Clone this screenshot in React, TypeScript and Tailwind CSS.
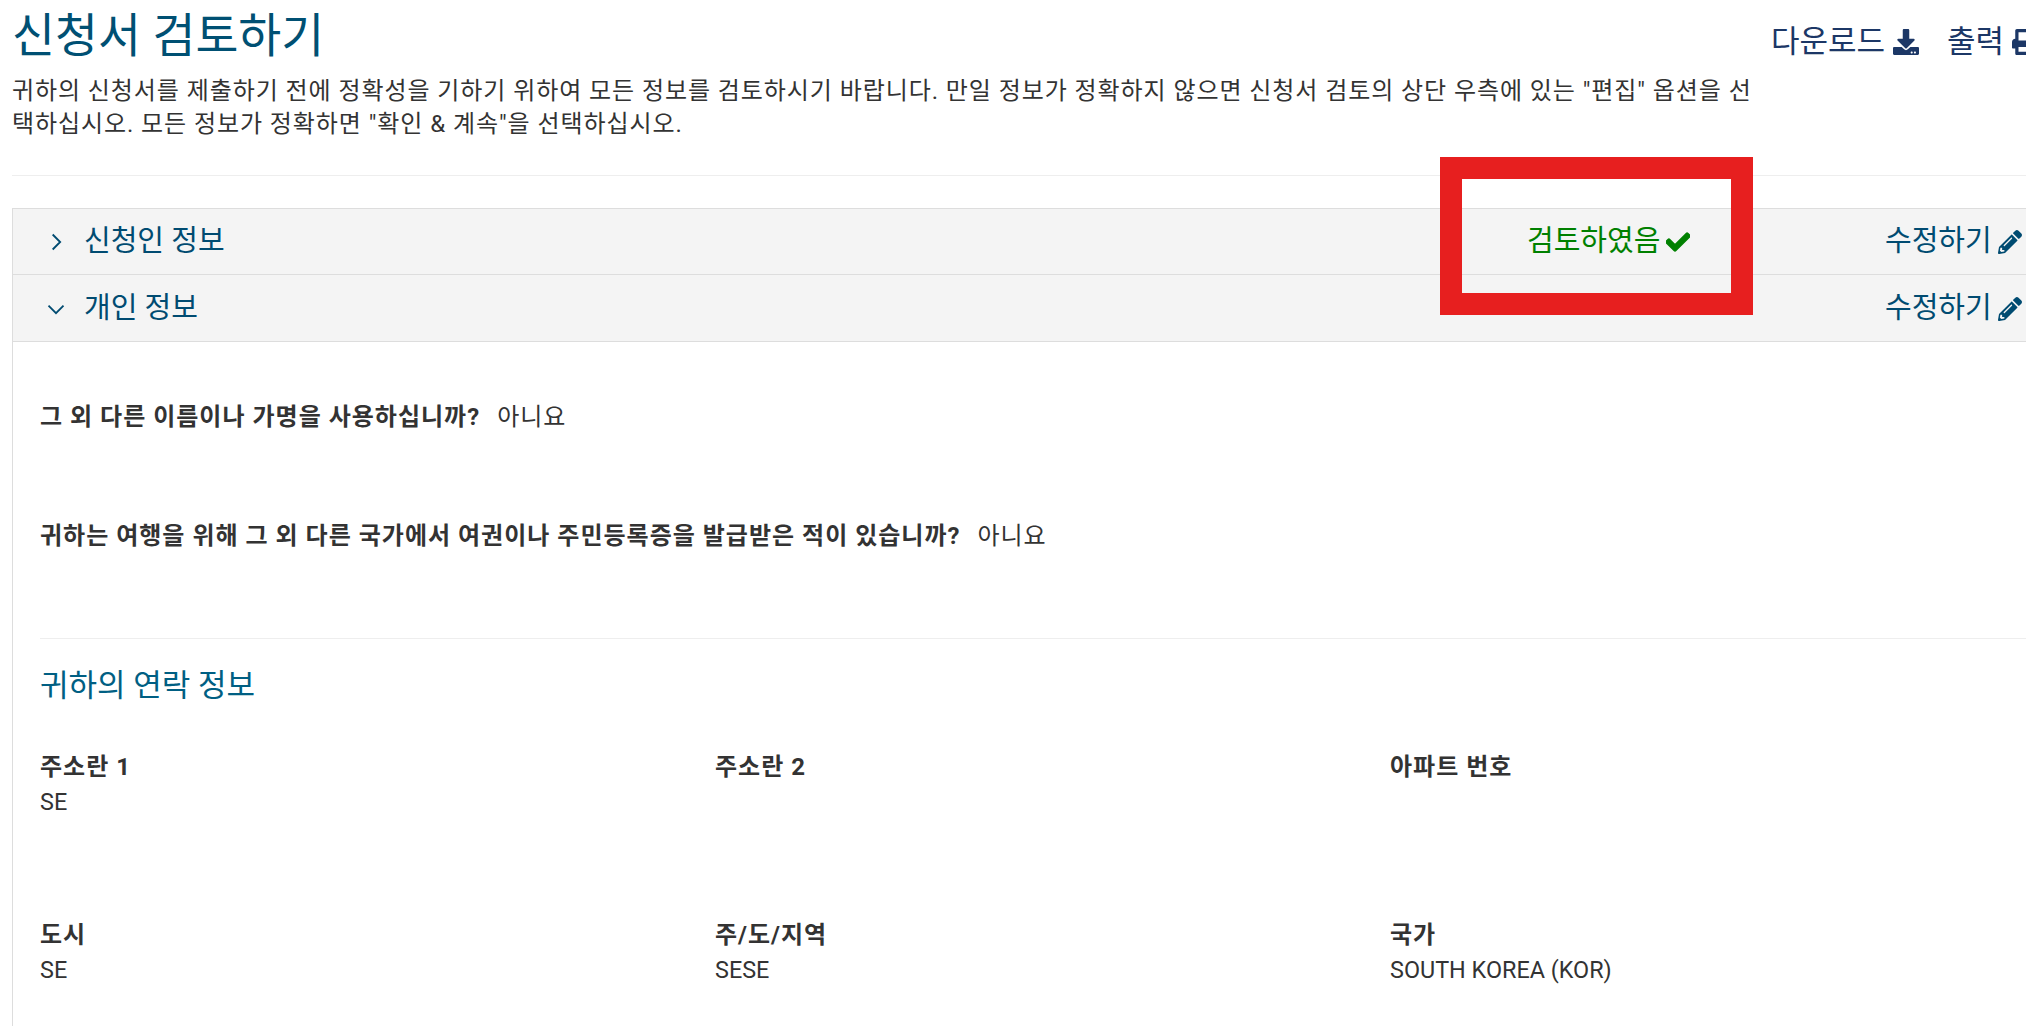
import React from 'react';
import { FaCheck, FaDownload, FaPencilAlt, FaPrint } from 'react-icons/fa';

type Field = { label: string; value?: string };

const rows: Field[][] = [
  [{ label: '주소란 1', value: 'SE' }, { label: '주소란 2' }, { label: '아파트 번호' }],
  [{ label: '도시', value: 'SE' }, { label: '주/도/지역', value: 'SESE' }, { label: '국가', value: 'SOUTH KOREA (KOR)' }],
];

const EditLink = () => (
  <span className="flex items-center gap-[6px] text-[29px] text-[#004b71]">
    수정하기
    <FaPencilAlt className="h-[24px] w-[24px]" />
  </span>
);

const Question = ({ q, a }: { q: string; a: string }) => (
  <p className="text-[24px] leading-[30px] tracking-[1px] text-[#333]">
    <b className="font-bold">{q}</b>
    <span className="ml-[17px]">{a}</span>
  </p>
);

export default function App() {
  return (
    <div className="relative h-[1026px] w-[2026px] overflow-hidden bg-white font-['Roboto','Noto_Sans_CJK_KR',sans-serif]">
      <div className="w-[2100px] pl-3">
        <div className="flex h-[176px] border-b border-[#eeeeee]">
          <div className="w-[1750px] shrink-0">
            <h1 className="mt-[8px] text-[46.7px] leading-[56px] font-normal text-[#005073]">신청서 검토하기</h1>
            <p className="mt-[11px] text-[24px] leading-[33px] tracking-[0.92px] text-[#333]">
              귀하의 신청서를 제출하기 전에 정확성을 기하기 위하여 모든 정보를 검토하시기 바랍니다. 만일 정보가 정확하지 않으면 신청서 검토의 상단 우측에 있는 "편집" 옵션을 선택하십시오. 모든 정보가 정확하면 "확인 &amp; 계속"을 선택하십시오.
            </p>
          </div>
          <div className="ml-[9px] flex h-fit shrink-0 items-center pt-[22px] text-[31px] leading-[40px] text-[#1c3766]">
            <span>다운로드</span>
            <FaDownload className="ml-[8px] h-[26px] w-[26px]" />
            <span className="ml-[28px]">출력</span>
            <FaPrint className="ml-[8px] h-[26px] w-[26px]" />
          </div>
        </div>

        <div className="mt-[32px] border-l border-[#dddddd]">
          <div className="flex h-[67px] items-center border-y border-[#dddddd] bg-[#f4f4f4] pl-[33px]">
            <svg viewBox="0 0 12 12" className="h-[20px] w-[20px] text-[#004b71]" fill="none" stroke="currentColor" strokeWidth="1.1">
              <path d="M4 1.5 8.5 6 4 10.5" />
            </svg>
            <span className="ml-[18px] w-[1443px] shrink-0 text-[29px] text-[#004b71]">신청인 정보</span>
            <span className="flex w-[358px] shrink-0 items-center gap-[6px] text-[29px] text-[#008000]">
              검토하였음
              <FaCheck className="h-[24px] w-[24px] stroke-[30]" />
            </span>
            <EditLink />
          </div>
          <div className="flex h-[67px] items-center border-b border-[#dddddd] bg-[#f4f4f4] pb-[0px] pl-[33px] pt-[1px]">
            <svg viewBox="0 0 12 12" className="h-[20px] w-[20px] text-[#004b71]" fill="none" stroke="currentColor" strokeWidth="1.1">
              <path d="M1.5 4 6 8.5 10.5 4" />
            </svg>
            <span className="ml-[18px] w-[1801px] shrink-0 text-[29px] text-[#004b71]">개인 정보</span>
            <EditLink />
          </div>

          <div className="pl-[27px] pt-[60px]">
            <div className="flex flex-col gap-[89px]">
              <Question q="그 외 다른 이름이나 가명을 사용하십니까?" a="아니요" />
              <Question q="귀하는 여행을 위해 그 외 다른 국가에서 여권이나 주민등록증을 발급받은 적이 있습니까?" a="아니요" />
            </div>
            <div className="mt-[87px] border-t border-[#eeeeee] pt-[27px]">
              <h2 className="text-[31px] leading-[40px] font-normal text-[#005f83]">귀하의 연락 정보</h2>
              {rows.map((row, i) => (
                <div key={row[0].label} className={i === 0 ? 'mt-[44px] grid h-[122px] grid-cols-[675px_675px_675px]' : 'mt-[46px] grid h-[122px] grid-cols-[675px_675px_675px]'}>
                  {row.map((f) => (
                    <div key={f.label} className="text-[24px] leading-[35px] text-[#333]">
                      <div className="font-bold tracking-[1px]">{f.label}</div>
                      {f.value && <div className="text-[23.4px]">{f.value}</div>}
                    </div>
                  ))}
                </div>
              ))}
            </div>
          </div>
        </div>
      </div>
      {/* red highlight drawn over the screenshot */}
      <div className="absolute left-[1440px] top-[157px] h-[158px] w-[313px] border-[22px] border-[#e71f1f]" />
    </div>
  );
}
